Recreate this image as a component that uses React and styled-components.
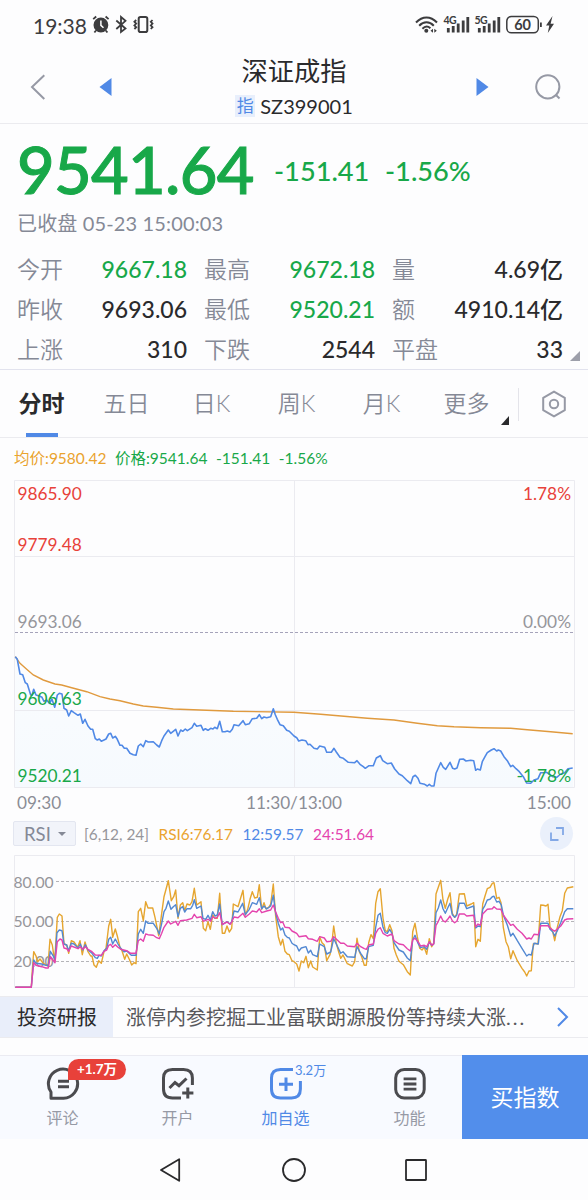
import React from 'react'
import styled, { createGlobalStyle } from "styled-components";

const GREEN = "#18a849";
const RED = "#e8413a";
const BLUE = "#5089e6";
const GREY = "#858996";

const stats = [
  { label: "今开", value: "9667.18", color: GREEN },
  { label: "最高", value: "9672.18", color: GREEN },
  { label: "量", value: "4.69亿" },
  { label: "昨收", value: "9693.06" },
  { label: "最低", value: "9520.21", color: GREEN },
  { label: "额", value: "4910.14亿" },
  { label: "上涨", value: "310" },
  { label: "下跌", value: "2544" },
  { label: "平盘", value: "33" },
];

const tabs = ["分时", "五日", "日K", "周K", "月K", "更多"];

// each series is stored per session, the afternoon one starts at x = 0 again
const price = {
  morning: "46,50 52,58 60,102 68,104 76,128 82,132 92,165 96,166 101,148 108,165 118,168 126,172 132,184 140,180 148,190 156,178 164,202 172,165 178,160 186,162 192,205 200,210 206,228 214,212 222,218 234,226 241,222 248,250 255,238 264,258 272,268 278,268 286,296 292,300 298,297 304,304 312,300 318,297 326,282 332,280 338,294 346,289 352,298 360,316 366,316 373,325 380,325 390,340 400,344 408,346 415,318 422,312 430,320 437,302 445,306 460,305 470,315 478,321 485,302 492,288 505,270 512,280 527,268 534,288 542,270 548,274 556,267 562,272 576,263 583,250 590,259 603,256 610,271 616,266 624,271 632,265 639,267 644,262 652,266 659,244 667,275 675,275 682,273 690,276 697,268 702,254 716,257 729,242 736,254 748,251 757,236 770,235 778,224 785,236 792,231 800,233 812,230 820,206 826,224 832,238 840,254 850,257 860,271 868,274",
  afternoon: "0,288 8,293 14,303 24,300 35,302 42,314 48,313 60,325 70,327 77,318 92,322 98,337 112,337 120,325 127,336 138,352 148,355 163,367 182,368 189,362 198,373 208,380 214,385 225,377 238,377 247,354 259,347 266,362 280,371 292,369 302,387 315,402 325,407 340,422 350,431 357,410 364,406 372,415 378,430 392,433 400,438 406,433 412,438 420,438 426,400 440,368 448,382 455,388 468,367 476,385 482,387 489,384 497,358 508,357 516,363 530,361 539,362 545,391 550,387 559,390 565,365 573,350 580,338 592,330 600,326 608,333 613,330 620,333 630,350 640,362 650,380 656,376 666,386 676,395 688,410 698,429 710,430 720,420 732,416 740,398 748,398 758,397 765,402 776,410 788,412 800,402 812,398 822,386 836,384",
};
const average = {
  morning: "46,50 60,70 80,88 100,105 130,120 165,132 185,135 215,143 260,155 300,170 330,177 360,182 400,192 430,198 470,202 520,207 580,209 700,214",
  afternoon: "0,217 80,223 150,229 220,235 300,240 370,250 430,257 480,260 560,263 650,265 700,269 770,275 836,281",
};
const rsi6 = {
  morning: "46,532 94,532 97,480 101,425 108,438 113,455 120,447 128,458 138,465 144,465 150,388 157,405 164,455 172,322 178,312 186,318 192,402 200,405 206,430 214,392 222,396 233,412 240,392 247,434 255,396 264,425 272,438 276,438 282,465 289,472 296,452 304,460 312,425 318,415 326,348 332,328 338,382 346,357 352,378 360,412 366,422 374,448 380,432 388,448 395,465 402,458 408,461 415,305 422,295 430,332 437,275 444,294 458,294 465,322 476,377 485,310 492,260 505,212 514,272 521,260 527,240 534,325 541,285 548,278 554,302 561,282 570,285 576,275 583,235 590,285 603,275 610,355 617,362 624,335 631,358 638,315 645,325 652,325 659,250 667,370 674,370 681,348 688,366 695,355 700,282 714,290 729,241 736,315 743,298 750,268 757,245 764,264 772,262 778,224 785,298 792,278 798,296 806,292 812,282 820,222 827,320 835,380 842,405 848,388 855,424 862,432 868,434 876,452",
  afternoon: "0,365 8,372 15,393 22,363 29,368 36,349 43,383 50,363 56,381 70,390 77,290 84,308 91,315 98,362 108,344 112,325 119,258 127,310 134,336 140,355 147,345 160,371 175,378 182,365 189,295 196,335 203,350 211,376 217,376 224,308 231,284 238,296 245,190 252,155 259,146 267,235 274,272 280,275 287,254 294,272 300,325 307,345 315,364 328,374 340,395 349,405 356,275 363,250 370,290 377,325 384,330 391,322 398,343 406,296 413,320 419,310 426,162 433,142 440,121 447,180 454,205 461,178 468,158 475,220 482,232 488,222 496,162 511,161 518,198 532,192 539,188 545,320 552,298 559,304 566,192 573,168 580,146 588,142 595,130 600,128 608,175 615,172 621,188 628,262 636,305 643,320 650,356 657,332 670,362 684,385 692,396 698,408 705,393 712,392 718,312 725,310 732,312 740,195 748,196 756,198 762,193 768,260 776,275 782,302 790,262 798,230 805,212 812,160 820,144 838,140",
};
const rsi12 = {
  morning: "46,532 94,532 101,450 108,460 125,462 138,466 145,466 151,424 160,438 165,450 171,368 178,360 186,362 192,402 200,405 206,422 214,400 222,402 234,414 241,402 248,420 256,404 264,420 276,430 286,443 292,445 297,436 304,438 312,422 320,415 326,388 332,382 338,402 346,387 354,402 362,415 372,425 380,423 394,436 408,436 415,372 422,358 430,370 437,333 444,340 460,340 470,355 478,372 485,340 492,305 498,295 505,273 513,298 520,290 527,284 534,320 541,295 548,290 554,306 561,296 572,296 578,286 583,269 590,295 603,288 609,325 617,328 624,316 631,330 638,305 645,318 652,315 659,282 667,344 681,335 690,342 695,335 702,303 714,306 728,280 736,314 748,298 757,278 770,283 778,263 785,296 792,288 800,297 812,288 820,256 827,310 835,340 842,360 848,354 855,375 862,382 868,384 876,400",
  afternoon: "0,314 8,318 15,333 22,324 36,320 43,339 50,331 56,344 70,350 77,312 91,320 98,342 110,336 119,296 127,312 140,340 147,335 160,350 182,352 189,320 200,340 211,356 217,356 224,320 238,316 245,262 252,226 259,220 267,262 274,278 280,280 287,268 294,280 300,308 315,330 328,336 340,354 349,362 356,300 363,286 372,310 380,323 391,320 398,328 406,306 413,316 419,312 426,218 433,204 440,180 447,206 454,220 461,204 468,190 475,224 482,232 488,226 496,190 511,190 518,206 539,198 545,264 552,258 559,260 566,208 573,196 580,180 588,178 595,170 600,169 608,186 615,184 622,195 628,225 640,255 650,288 657,280 670,302 684,325 698,348 705,343 712,345 720,310 733,312 740,250 762,250 768,268 776,275 782,288 790,272 800,248 812,215 820,206 838,206",
};
const rsi24 = {
  morning: "46,532 94,532 101,458 108,466 125,470 138,474 145,474 151,440 165,458 172,395 180,387 186,390 192,414 200,416 206,424 214,408 234,416 241,410 248,418 256,410 264,418 276,425 286,435 304,436 312,424 320,420 326,406 332,403 338,412 346,404 354,412 362,418 380,422 392,430 408,430 415,392 422,387 430,394 437,372 444,374 460,376 470,383 478,386 485,370 492,352 505,333 512,342 527,334 534,346 541,332 560,330 576,325 583,313 590,323 603,320 610,334 624,328 632,334 638,320 645,325 652,322 659,308 667,343 681,336 690,343 695,336 702,321 714,323 729,310 736,322 748,312 757,303 770,306 778,296 785,308 800,303 812,300 820,285 827,306 835,325 842,338 848,336 855,352 868,353 876,363",
  afternoon: "0,276 8,280 15,290 36,287 43,296 56,298 70,304 77,290 91,294 98,305 110,304 119,290 130,300 140,310 150,310 160,318 182,320 189,310 200,320 211,326 217,328 224,315 238,312 245,280 252,268 259,263 267,280 280,288 294,282 300,302 315,312 328,314 340,326 349,333 356,300 363,295 372,305 380,318 391,316 398,320 406,306 413,315 419,312 426,256 433,244 440,228 447,242 454,246 461,238 468,228 475,242 482,248 489,243 496,222 511,222 518,228 539,226 545,260 552,252 559,256 566,222 580,208 595,206 600,200 608,207 620,208 630,228 650,256 657,253 670,268 684,280 698,297 705,294 712,297 720,283 733,284 740,257 762,257 768,264 782,274 800,258 812,240 820,237 838,236",
};

// joins both sessions, result is in px of the svg
function toPoints(series, morningY, afternoonY) {
  const parse = (str, dx, dy) =>
    str.split(" ").map((pair) => {
      const [x, y] = pair.split(",").map(Number);
      return `${((x + dx) / 3).toFixed(1)},${(y / 3 + dy).toFixed(1)}`;
    });
  return [...parse(series.morning, 0, morningY), ...parse(series.afternoon, 882, afternoonY)].join(" ");
}

function StatusBar() {
  return (
    <StyledStatus>
      <StyledTime>19:38</StyledTime>
      <svg width="64" height="20" viewBox="0 0 64 20" fill="none" stroke="#3c3c3e">
        <circle cx="8.9" cy="10" r="7.4" fill="#3c3c3e" stroke="none" />
        <path d="M1.2 4.2L4.2 1.5M13.6 1.5L16.6 4.2M4 15.5L2.4 17.5M13.8 15.5L15.4 17.5" strokeWidth="1.8" />
        <path d="M8.9 5.5V10.4L11.5 12.8" stroke="#fff" strokeWidth="1.5" />
        <path d="M24.3 5.5L33.5 13.5L29 17V2L33.5 5.8L24.3 14" strokeWidth="1.8" />
        <rect x="46.7" y="2" width="8.6" height="15" rx="1.8" strokeWidth="2" />
        <path d="M44.2 5L42.4 6.8L44.2 8.6L42.4 10.4L44.2 12.2L42.4 14M60.5 5L58.8 6.8L60.5 8.6L58.8 10.4L60.5 12.2L58.8 14" strokeWidth="1.8" />
      </svg>
      <StyledStatusRight>
        <svg width="140" height="20" viewBox="0 0 140 20" fill="none" stroke="#3c3c3e">
          <path d="M1 7.5C7.5 0.7 15.5 0.7 22 7.5M4.2 10.8C8.6 6.2 14.4 6.2 18.8 10.8M7.4 13.7C10 11 13 11 15.4 13.3" strokeWidth="2" />
          <circle cx="11.3" cy="15.7" r="2" fill="#3c3c3e" stroke="none" />
          <path d="M15.5 15.7L18 13.7V17.7ZM21.8 15.7L19.3 13.7V17.7Z" fill="#3c3c3e" stroke="none" />
          <path d="M33.3 13V17.5M38.2 11V17.5M43.2 8.5V17.5M48.2 5.5V17.5M52.8 2V17.5" strokeWidth="2.8" />
          <path d="M64.3 13V17.5M69.2 11V17.5M74.2 8.5V17.5M79.2 5.5V17.5M83.8 2V17.5" strokeWidth="2.8" />
          <rect x="91.8" y="1.5" width="31.5" height="16.3" rx="4.5" strokeWidth="1.5" />
          <path d="M125.9 7.5V12" strokeWidth="1.8" />
          <path d="M137.5 1L131 10.5H134.3L132.8 18L139 8.8H135.6Z" fill="#3c3c3e" stroke="none" />
          <StyledNetText x="28.5" y="9">4G</StyledNetText>
          <StyledNetText x="59.5" y="9">5G</StyledNetText>
          <StyledBattery x="107.6" y="14.8">60</StyledBattery>
        </svg>
      </StyledStatusRight>
    </StyledStatus>
  )
}

function Header() {
  return (
    <StyledHeader>
      <StyledBack>
        <svg width="16" height="26" viewBox="0 0 16 26" fill="none" stroke="#9699a5" strokeWidth="2">
          <path d="M14.3 1.2L2 13L14.3 25" />
        </svg>
      </StyledBack>
      <svg width="13" height="18" viewBox="0 0 13 18"><path d="M0.5 9L12.5 0V18Z" fill={BLUE} /></svg>
      <StyledTitleBox>
        <StyledTitle>深证成指</StyledTitle>
        <StyledCode><StyledTag>指</StyledTag>SZ399001</StyledCode>
      </StyledTitleBox>
      <svg width="13" height="18" viewBox="0 0 13 18"><path d="M12.5 9L0.5 0V18Z" fill={BLUE} /></svg>
      <StyledSearch>
        <svg width="28" height="28" viewBox="0 0 28 28" fill="none" stroke="#9699a5" strokeWidth="2">
          <circle cx="13.8" cy="13.8" r="11.6" />
          <path d="M21.5 21.5L25.5 25.5" />
        </svg>
      </StyledSearch>
    </StyledHeader>
  )
}

function Quote() {
  return (
    <StyledQuote>
      <StyledPriceRow>
        <StyledPrice>9541.64</StyledPrice>
        <StyledChange>-151.41</StyledChange>
        <StyledChange>-1.56%</StyledChange>
      </StyledPriceRow>
      <StyledClosed>已收盘 05-23 15:00:03</StyledClosed>
      <StyledStats>
        {stats.map((s) => (
          <StyledStat key={s.label}>
            <StyledStatLabel>{s.label}</StyledStatLabel>
            <StyledStatValue $color={s.color}>{s.value}</StyledStatValue>
          </StyledStat>
        ))}
      </StyledStats>
      <StyledCorner />
    </StyledQuote>
  )
}

function Tabs() {
  return (
    <StyledTabs>
      {tabs.map((t, i) => (
        <StyledTab key={t} $active={i === 0}>{t}</StyledTab>
      ))}
      <StyledMoreArrow />
      <StyledSetting>
        <svg width="26" height="28" viewBox="0 0 26 28" fill="none" stroke="#9699a5" strokeWidth="2">
          <path d="M13 1.6L23.8 7.8V20.2L13 26.4L2.2 20.2V7.8Z" strokeLinejoin="round" />
          <circle cx="13" cy="14" r="4.2" />
        </svg>
      </StyledSetting>
    </StyledTabs>
  )
}

function PriceChart() {
  const line = toPoints(price, 160, 160);
  return (
    <StyledSvg width="588" height="308" viewBox="0 0 588 308">
      <defs>
        <linearGradient id="fill" x1="0" y1="0" x2="0" y2="1">
          <stop offset="0" stopColor="#fafcfe" />
          <stop offset="1" stopColor="#f6fafe" />
        </linearGradient>
      </defs>
      <polygon points={`15,307 ${line} 573,307`} fill="url(#fill)" />
      <path d="M14.5 0.5H574.5V307.5H14.5ZM14.5 76.5H574.5M14.5 230.5H574.5M294.5 0.5V307.5" fill="none" stroke="#ebebf0" />
      <path d="M15 152.5H574" stroke="#a5a3ba" strokeDasharray="3 2" />
      <polyline points={toPoints(average, 160, 160)} fill="none" stroke="#e09a3e" strokeWidth="1.4" />
      <polyline points={line} fill="none" stroke={BLUE} strokeWidth="1.6" strokeLinejoin="round" />
      <StyledAxis x="17.5" y="20" fill={RED}>9865.90</StyledAxis>
      <StyledAxis x="17.5" y="70.5" fill={RED}>9779.48</StyledAxis>
      <StyledAxis x="17.5" y="148" fill="#96969b">9693.06</StyledAxis>
      <StyledAxis x="17.5" y="225" fill={GREEN}>9606.63</StyledAxis>
      <StyledAxis x="17.5" y="302" fill={GREEN}>9520.21</StyledAxis>
      <StyledAxis x="571" y="20" fill={RED} textAnchor="end">1.78%</StyledAxis>
      <StyledAxis x="571" y="148" fill="#96969b" textAnchor="end">0.00%</StyledAxis>
      <StyledAxis x="571" y="302" fill={GREEN} textAnchor="end">-1.78%</StyledAxis>
    </StyledSvg>
  )
}

function RsiChart() {
  return (
    <StyledSvg width="588" height="134" viewBox="0 0 588 134">
      <path d="M14.5 0.5H574.5V132.5H14.5ZM294.5 0.5V132.5" fill="none" stroke="#ebebf0" />
      <path d="M56 26.5H574M56 66.5H574M56 106.5H574" stroke="#b4b4b8" strokeDasharray="3 2" />
      <StyledAxis x="13.5" y="33" fill="#96969b" $size="15.7px">80.00</StyledAxis>
      <StyledAxis x="13.5" y="72" fill="#96969b" $size="15.7px">50.00</StyledAxis>
      <StyledAxis x="13.5" y="112" fill="#96969b" $size="15.7px">20.00</StyledAxis>
      <g fill="none" strokeWidth="1.4" strokeLinejoin="round">
        <polyline points={toPoints(rsi6, -45, -15)} stroke="#e5a52f" />
        <polyline points={toPoints(rsi12, -45, -15)} stroke="#5288d2" />
        <polyline points={toPoints(rsi24, -45, -15)} stroke="#e444ae" />
      </g>
    </StyledSvg>
  )
}

function BottomBar() {
  return (
    <StyledBottom>
      <StyledBottomItem $width="125px">
        <svg width="34" height="34" viewBox="0 0 34 34" fill="none" stroke="#4b4b4f" strokeWidth="3">
          <path d="M5 31.3H17.5A14.6 14.6 0 1 0 5 25Z" strokeLinejoin="round" />
          <path d="M12 14.2H23M12 19.8H23" />
        </svg>
        评论
        <StyledBadge>+1.7万</StyledBadge>
      </StyledBottomItem>
      <StyledBottomItem $width="105px">
        <svg width="34" height="34" viewBox="0 0 34 34" fill="none" stroke="#4b4b4f" strokeWidth="3">
          <path d="M31.4 18V11Q31.4 2.4 22.5 2.4H11.5Q2.5 2.4 2.5 11V22Q2.5 31 11.5 31H20" />
          <path d="M8.5 21L14 15.5L18 18.7L25.5 11.5M26.8 20.5V31.5M21.2 26H32.4" />
        </svg>
        开户
      </StyledBottomItem>
      <StyledBottomItem $width="111px" $active>
        <svg width="34" height="34" viewBox="0 0 34 34" fill="none" stroke={BLUE} strokeWidth="3">
          <path d="M24 2.4H11.5Q2.5 2.4 2.5 11V22Q2.5 31 11.5 31H22.5Q31.4 31 31.4 22V14" />
          <path d="M17 10.5V24M10 17.2H24" />
        </svg>
        加自选
        <StyledCount>3.2万</StyledCount>
      </StyledBottomItem>
      <StyledBottomItem $width="121px" $shift="16px">
        <svg width="34" height="34" viewBox="0 0 34 34" fill="none" stroke="#4b4b4f" strokeWidth="3">
          <rect x="2.7" y="2.4" width="28.5" height="28.6" rx="8.5" />
          <path d="M10.6 11.8H23.4M10.6 17H23.4M10.6 22.2H23.4" strokeWidth="2.8" />
        </svg>
        功能
      </StyledBottomItem>
      <StyledBuy>买指数</StyledBuy>
    </StyledBottom>
  )
}

export default function App() {
  return (
    <StyledPage>
      <GlobalStyle />
      <StatusBar />
      <Header />
      <Quote />
      <Tabs />
      <StyledLegend>
        <StyledLegendItem $color="#eaa32e">均价:9580.42</StyledLegendItem>
        <StyledLegendItem $color={GREEN}>价格:9541.64</StyledLegendItem>
        <StyledLegendItem $color={GREEN}>-151.41</StyledLegendItem>
        <StyledLegendItem $color={GREEN}>-1.56%</StyledLegendItem>
      </StyledLegend>
      <PriceChart />
      <StyledTimes>
        <span>09:30</span>
        <span>11:30/13:00</span>
        <span>15:00</span>
      </StyledTimes>
      <StyledRsiRow>
        <StyledSelect>RSI<i /></StyledSelect>
        <StyledRsiItem $color="#96969b">[6,12, 24]</StyledRsiItem>
        <StyledRsiItem $color="#eaa32e">RSI6:76.17</StyledRsiItem>
        <StyledRsiItem $color={BLUE}>12:59.57</StyledRsiItem>
        <StyledRsiItem $color="#e444ae">24:51.64</StyledRsiItem>
        <StyledExpand>
          <svg width="14" height="14" viewBox="0 0 14 14" fill="none" stroke="#83a8e6" strokeWidth="1.8">
            <path d="M6 1H13V8M1 5.5V13H8.5" />
          </svg>
        </StyledExpand>
      </StyledRsiRow>
      <RsiChart />
      <StyledNews>
        <StyledNewsTag>投资研报</StyledNewsTag>
        <StyledNewsText>涨停内参挖掘工业富联朗源股份等持续大涨<span>...</span></StyledNewsText>
        <svg width="12" height="20" viewBox="0 0 12 20" fill="none" stroke={BLUE} strokeWidth="2">
          <path d="M1 1L10 10L1 19" />
        </svg>
      </StyledNews>
      <BottomBar />
      <StyledNav>
        <svg width="24" height="24" viewBox="0 0 24 24"><path d="M2 12L20.2 1.2V22.8Z" /></svg>
        <svg width="26" height="24" viewBox="0 0 26 24"><circle cx="13" cy="12" r="11" /></svg>
        <svg width="22" height="22" viewBox="0 0 22 22"><rect x="1" y="1" width="20" height="20" rx="0.5" /></svg>
      </StyledNav>
    </StyledPage>
  )
}

const GlobalStyle = createGlobalStyle`
  body {
    margin: 0;
    background-color: #fdfdfe;
    font-family: Lato, "Noto Sans CJK SC", sans-serif;
    color: #2a2a2c;
  }
  * {
    box-sizing: border-box;
  }
  svg {
    display: block;
    flex-shrink: 0;
  }
`;

const StyledPage = styled.div`
  width: 588px;
  height: 1200px;
  overflow: hidden;
  display: flex;
  flex-direction: column;
  > * {
    flex-shrink: 0;
  }
`;
const StyledStatus = styled.div`
  height: 50px;
  padding: 0 33px;
  display: flex;
  align-items: center;
`;
const StyledTime = styled.div`
  width: 59px;
  font-size: 21px;
  color: #3c3c3e;
  white-space: nowrap;
`;
const StyledStatusRight = styled.div`
  margin-left: auto;
`;
const StyledNetText = styled.text`
  font-size: 10.5px;
  font-weight: 700;
  fill: #3c3c3e;
  stroke: none;
  letter-spacing: -0.5px;
`;
const StyledBattery = styled.text`
  font-size: 14.5px;
  font-weight: 700;
  fill: #3c3c3e;
  stroke: none;
  text-anchor: middle;
`;
const StyledHeader = styled.div`
  height: 74px;
  padding: 0 26px 0 30px;
  display: flex;
  align-items: center;
  border-bottom: 1px solid #ebebef;
`;
const StyledBack = styled.div`
  width: 69px;
`;
const StyledSearch = styled.div`
  margin-left: auto;
`;
const StyledTitleBox = styled.div`
  display: flex;
  flex-direction: column;
  align-items: center;
  width: 364px;
`;
const StyledTitle = styled.div`
  font-size: 26.3px;
  line-height: 36px;
  margin-top: -4px;
`;
const StyledCode = styled.div`
  display: flex;
  align-items: center;
  font-size: 20px;
  line-height: 22px;
  margin-top: 6px;
`;
const StyledTag = styled.span`
  width: 20px;
  height: 22px;
  margin-right: 5px;
  font-size: 17px;
  text-align: center;
  color: ${BLUE};
  background-color: #e8effc;
`;
const StyledQuote = styled.div`
  position: relative;
  height: 246px;
  padding-left: 17px;
  border-bottom: 1px solid #e2e3ee;
`;
const StyledPriceRow = styled.div`
  display: flex;
  align-items: center;
  height: 88px;
  padding-top: 4px;
  color: ${GREEN};
`;
const StyledPrice = styled.div`
  width: 257px;
  padding-bottom: 3px;
  font-size: 65px;
  font-weight: 500;
  line-height: 80px;
  letter-spacing: -0.7px;
  -webkit-text-stroke: 1px ${GREEN};
`;
const StyledChange = styled.div`
  width: 111px;
  font-size: 27.2px;
  font-weight: 500;
`;
const StyledClosed = styled.div`
  height: 24px;
  font-size: 20px;
  line-height: 23px;
  letter-spacing: 0.15px;
  color: ${GREY};
`;
const StyledStats = styled.div`
  display: grid;
  grid-template-columns: 170px 171px 171px;
  column-gap: 17px;
  grid-auto-rows: 40px;
  padding-top: 13px;
`;
const StyledStat = styled.div`
  display: flex;
  align-items: center;
  justify-content: space-between;
  font-size: 23px;
  line-height: 40px;
`;
const StyledStatLabel = styled.span`
  font-weight: 350;
  color: ${GREY};
`;
const StyledStatValue = styled.span`
  font-weight: 500;
  color: ${(p) => p.$color || "#2a2a2c"};
`;
const StyledCorner = styled.div`
  position: absolute;
  right: 8px;
  bottom: 8px;
  border-left: 10px solid transparent;
  border-bottom: 10px solid #9d9faa;
`;
const StyledTabs = styled.div`
  position: relative;
  height: 68px;
  display: flex;
  border-bottom: 1px solid #ebebef;
`;
const StyledTab = styled.div`
  position: relative;
  width: 85px;
  padding-right: 2px;
  text-align: center;
  font-size: 23px;
  line-height: 67px;
  font-weight: ${(p) => (p.$active ? 700 : 350)};
  color: ${(p) => (p.$active ? "#2a2a2c" : GREY)};
  &::after {
    content: "";
    display: ${(p) => (p.$active ? "block" : "none")};
    position: absolute;
    left: 26px;
    bottom: 0;
    width: 32px;
    height: 4px;
    background-color: ${BLUE};
  }
`;
const StyledMoreArrow = styled.div`
  position: absolute;
  left: 501px;
  bottom: 12px;
  border-left: 8px solid transparent;
  border-bottom: 9px solid #2a2a2c;
`;
const StyledSetting = styled.div`
  margin: 18px 0 0 8px;
  padding: 2px 0 0 22px;
  height: 33px;
  border-left: 1px solid #e4e4ea;
`;
const StyledLegend = styled.div`
  display: flex;
  gap: 8.5px;
  height: 42px;
  padding-left: 14px;
  line-height: 40px;
`;
const StyledLegendItem = styled.span`
  font-size: 15.5px;
  color: ${(p) => p.$color};
`;
const StyledSvg = styled.svg`
  display: block;
`;
const StyledAxis = styled.text`
  font-size: ${(p) => p.$size || "17.3px"};
`;
const StyledTimes = styled.div`
  display: flex;
  justify-content: space-between;
  height: 29px;
  padding: 0 17px;
  font-size: 17.2px;
  line-height: 29px;
  color: #8b8d96;
`;
const StyledRsiRow = styled.div`
  display: flex;
  align-items: center;
  height: 38px;
  padding: 0 15px 5px 13px;
`;
const StyledSelect = styled.div`
  display: flex;
  align-items: center;
  width: 63px;
  height: 25px;
  padding-left: 10px;
  margin-right: 8px;
  font-size: 18.5px;
  color: ${GREY};
  background-color: #f2f4fa;
  border: 1px solid #e3e6f0;
  border-radius: 2px;
  i {
    margin-left: 7px;
    border: 4px solid transparent;
    border-top: 4px solid ${GREY};
    border-bottom: 0;
  }
`;
const StyledRsiItem = styled.span`
  margin-right: 9.5px;
  font-size: 15.4px;
  color: ${(p) => p.$color};
`;
const StyledExpand = styled.div`
  display: flex;
  align-items: center;
  justify-content: center;
  width: 33px;
  height: 33px;
  margin-left: auto;
  border-radius: 50%;
  background-color: #eaf0fb;
`;
const StyledNews = styled.div`
  display: flex;
  align-items: center;
  height: 42px;
  margin: 7px 0 17px;
  border-top: 1px solid #ebebef;
  border-bottom: 1px solid #ebebef;
`;
const StyledNewsTag = styled.div`
  width: 113px;
  height: 40px;
  padding-left: 17px;
  font-size: 20px;
  line-height: 40px;
  background-color: #e9eefa;
`;
const StyledNewsText = styled.div`
  width: 444px;
  padding-left: 13px;
  font-size: 20px;
  line-height: 40px;
  color: #58585c;
  white-space: nowrap;
  span {
    letter-spacing: 2px;
  }
`;
const StyledBottom = styled.div`
  display: flex;
  height: 84px;
  border-top: 1px solid #ebebf2;
  background-color: #f8faff;
`;
const StyledBottomItem = styled.div`
  position: relative;
  display: flex;
  flex-direction: column;
  align-items: center;
  width: ${(p) => p.$width};
  padding: 11px 0 0 ${(p) => p.$shift || 0};
  font-size: 16px;
  line-height: 34px;
  color: ${(p) => (p.$active ? BLUE : "#9699a5")};
`;
const StyledBadge = styled.div`
  position: absolute;
  left: 68px;
  top: 3px;
  width: 58px;
  height: 21px;
  border-radius: 11px 11px 11px 0;
  text-align: center;
  font-size: 13.5px;
  font-weight: 700;
  line-height: 21px;
  color: #fff;
  background-color: ${RED};
`;
const StyledCount = styled.div`
  position: absolute;
  left: 65px;
  top: 3px;
  font-size: 13px;
  line-height: 22px;
`;
const StyledBuy = styled.div`
  flex: 1;
  margin-top: -1px;
  text-align: center;
  font-size: 23px;
  line-height: 84px;
  color: #fff;
  background-color: #528eeb;
`;
const StyledNav = styled.div`
  display: flex;
  align-items: center;
  justify-content: center;
  gap: 98px;
  height: 61px;
  padding-right: 2px;
  svg {
    fill: none;
    stroke: #2a2a2c;
    stroke-width: 1.8;
    stroke-linejoin: round;
  }
`;
